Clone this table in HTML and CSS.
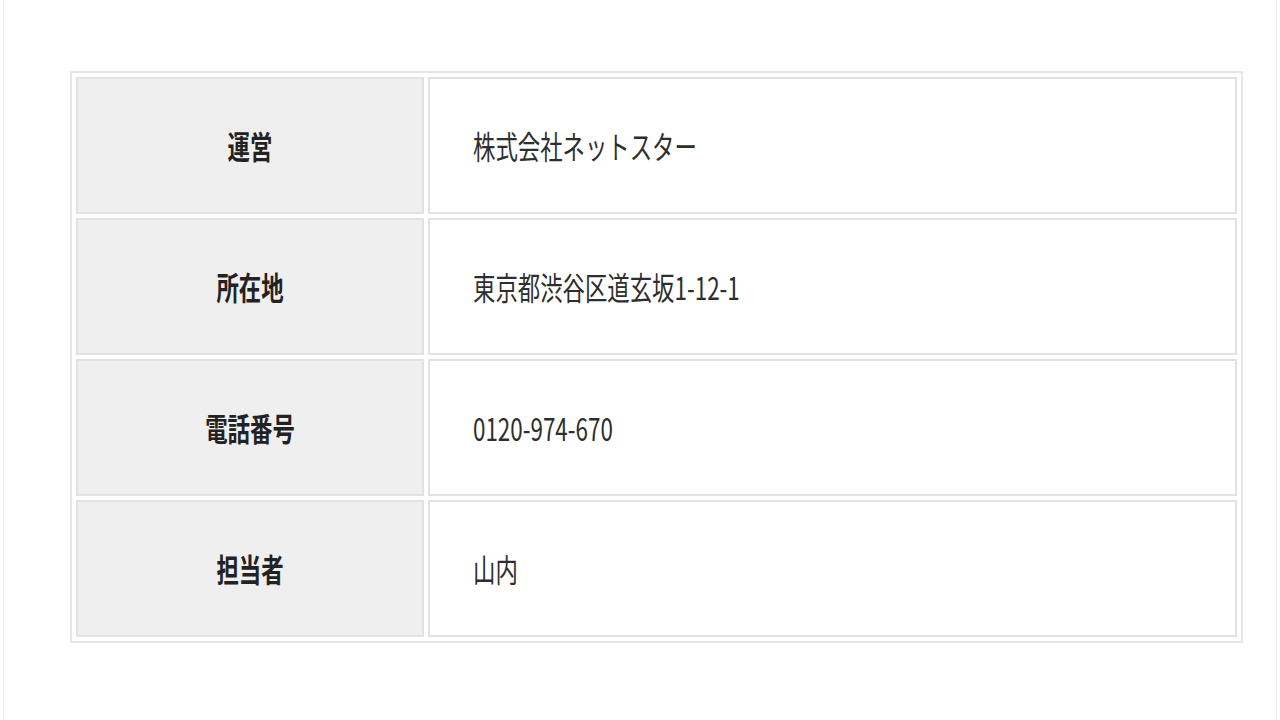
FILE: index.html
```html
<!DOCTYPE html>
<html lang="ja">
<head>
<meta charset="utf-8">
<title>会社概要</title>
<link rel="stylesheet" href="styles.css">
</head>
<body>
<div class="page">
  <table class="info">
    <tr>
      <th><span class="txt">運営</span></th>
      <td><span class="txt">株式会社ネットスター</span></td>
    </tr>
    <tr>
      <th><span class="txt">所在地</span></th>
      <td><span class="txt">東京都渋谷区道玄坂1-12-1</span></td>
    </tr>
    <tr>
      <th><span class="txt">電話番号</span></th>
      <td><span class="txt">0120-974-670</span></td>
    </tr>
    <tr>
      <th><span class="txt">担当者</span></th>
      <td><span class="txt">山内</span></td>
    </tr>
  </table>
</div>
</body>
</html>
```
FILE: styles.css
```css
html, body {
  margin: 0;
  padding: 0;
  background: #ffffff;
}
body {
  font-family: "Noto Sans CJK JP", "Noto Sans", sans-serif;
  color: #333;
}
.page {
  box-sizing: border-box;
  width: 1274px;
  height: 720px;
  margin: 0 0 0 3px;
  border-left: 1px solid #f0f0f0;
  border-right: 1px solid #f0f0f0;
  padding: 71px 0 0 66px;
}
.info {
  width: 1173px;
  border: 2px solid #e6e6e6;
  border-collapse: separate;
  border-spacing: 4px;
  box-sizing: border-box;
}
.info th,
.info td {
  height: 137px;
  box-sizing: border-box;
  border: 2px solid #e2e2e2;
  font-size: 22.4px;
  line-height: 1;
  padding: 0;
}
.info th {
  width: 348px;
  background: #efefef;
  text-align: center;
  font-weight: bold;
  color: #222;
}
.info td {
  background: #ffffff;
  text-align: left;
  padding-left: 43px;
  font-weight: 400;
  color: #2e2e2e;
}
.txt {
  display: inline-block;
  transform: scaleY(1.4);
}
```
